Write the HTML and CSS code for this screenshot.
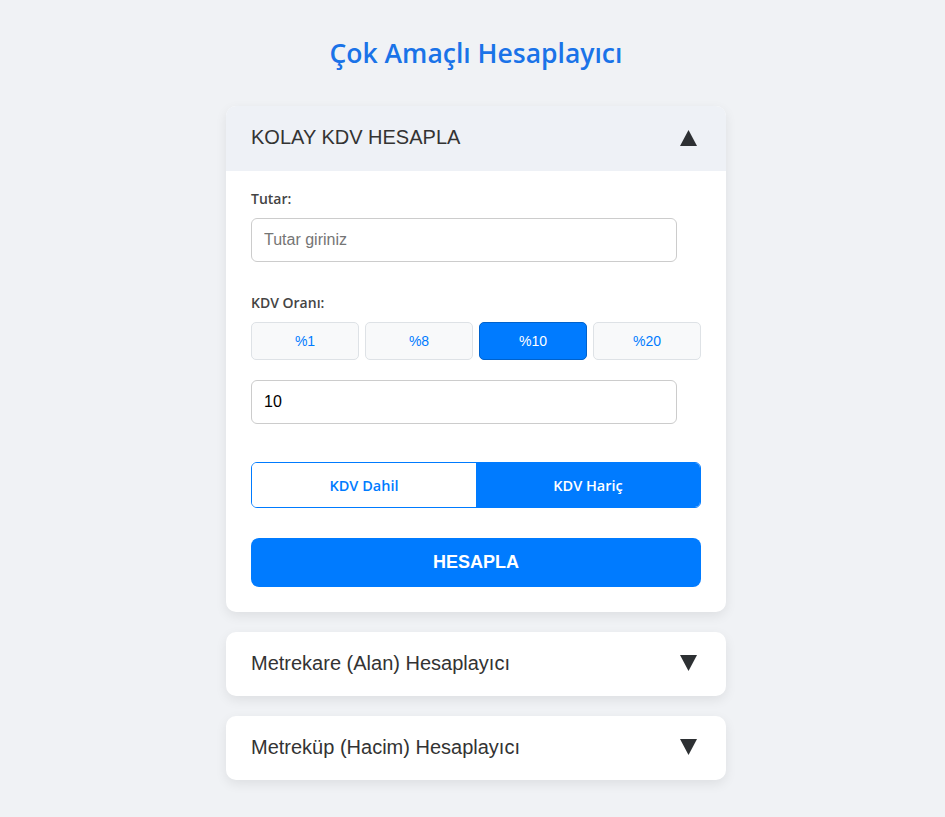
FILE: index.html
```html
<!DOCTYPE html>
<html lang="tr">
  <head>
    <meta charset="UTF-8" />
    <meta name="viewport" content="width=device-width, initial-scale=1.0" />
    <title>Çok Amaçlı Hesaplayıcı</title>
    <link rel="stylesheet" href="styles.css">
  </head>
  <body>
    <div class="container">
      <h1>Çok Amaçlı Hesaplayıcı</h1>

      <div class="card open">
        <div class="card-header">
          <span>KOLAY KDV HESAPLA</span>
          <svg class="arrow" viewBox="0 0 17 16"><polygon points="8.5,0 17,16 0,16" /></svg>
        </div>
        <div class="card-body">
          <label for="tutar">Tutar:</label>
          <input type="number" id="tutar" class="field" placeholder="Tutar giriniz" />

          <label class="rate-label">KDV Oranı:</label>
          <div class="rates">
            <button class="rate">%1</button>
            <button class="rate">%8</button>
            <button class="rate active">%10</button>
            <button class="rate">%20</button>
          </div>
          <input type="number" class="field rate-input" value="10" />

          <div class="toggle">
            <button class="toggle-btn">KDV Dahil</button>
            <button class="toggle-btn active">KDV Hariç</button>
          </div>

          <button class="calc-btn">HESAPLA</button>
        </div>
      </div>

      <div class="card">
        <div class="card-header closed">
          <span>Metrekare (Alan) Hesaplayıcı</span>
          <svg class="arrow" viewBox="0 0 17 16"><polygon points="0,0 17,0 8.5,16" /></svg>
        </div>
      </div>

      <div class="card">
        <div class="card-header closed">
          <span>Metreküp (Hacim) Hesaplayıcı</span>
          <svg class="arrow" viewBox="0 0 17 16"><polygon points="0,0 17,0 8.5,16" /></svg>
        </div>
      </div>
    </div>
  </body>
</html>
```

FILE: styles.css
```css
* {
  margin: 0;
  padding: 0;
  box-sizing: border-box;
}
body {
  background-color: #f0f2f5;
  font-family: 'Liberation Sans', Arial, sans-serif;
  color: #333;
  padding-left: 7px;
}
.container {
  width: 500px;
  margin: 0 auto;
  padding-top: 35px;
}
h1 {
  text-align: center;
  font-family: 'Open Sans', 'Noto Sans', sans-serif;
  font-weight: 600;
  font-size: 26.5px;
  color: #1a73e8;
  line-height: 36px;
  margin-bottom: 35px;
}
.card {
  background: #fff;
  border-radius: 10px;
  box-shadow: 0 4px 12px rgba(0, 0, 0, 0.08);
  margin-bottom: 20px;
  overflow: hidden;
}
.card-header {
  display: flex;
  justify-content: space-between;
  align-items: center;
  height: 65px;
  padding: 0 29px 2px 25px;
  font-size: 20px;
  color: #333;
}
.open .card-header {
  background: #eef1f6;
}
.card-header.closed {
  height: 64px;
}
.arrow {
  width: 17px;
  height: 16px;
  fill: #2d3033;
}
.card-body {
  padding: 20px 25px 25px;
}
label {
  display: block;
  font-family: 'Open Sans', 'Noto Sans', sans-serif;
  font-weight: 600;
  font-size: 14px;
  color: #444;
  line-height: 16px;
  margin-bottom: 11px;
}
.rate-label {
  margin-top: 33px;
}
.field {
  display: block;
  width: 426px;
  height: 44px;
  padding: 0 12px;
  border: 1px solid #ccc;
  border-radius: 6px;
  font-family: 'Liberation Sans', Arial, sans-serif;
  font-size: 16px;
  color: #000;
  background: #fff;
}
.field::placeholder {
  color: #757575;
}
.rates {
  display: flex;
  gap: 6px;
  margin-bottom: 20px;
}
.rate {
  flex: 1;
  height: 38px;
  background: #f8f9fa;
  border: 1px solid #dee2e6;
  border-radius: 5px;
  color: #007bff;
  font-family: 'Liberation Sans', Arial, sans-serif;
  font-size: 14px;
}
.rate.active {
  background: #007bff;
  border-color: #0062cc;
  color: #fff;
}
.rate-input {
  margin-bottom: 38px;
}
.toggle {
  display: flex;
  height: 46px;
  border: 1px solid #007bff;
  border-radius: 6px;
  overflow: hidden;
  margin-bottom: 30px;
}
.toggle-btn {
  flex: 1;
  border: none;
  background: #fff;
  color: #007bff;
  font-family: 'Open Sans', 'Noto Sans', sans-serif;
  font-weight: 600;
  font-size: 14.5px;
}
.toggle-btn.active {
  background: #007bff;
  color: #fff;
}
.calc-btn {
  display: block;
  width: 100%;
  height: 49px;
  border: none;
  border-radius: 8px;
  background: #007bff;
  color: #fff;
  font-family: 'Liberation Sans', Arial, sans-serif;
  font-weight: bold;
  font-size: 18px;
}
```
